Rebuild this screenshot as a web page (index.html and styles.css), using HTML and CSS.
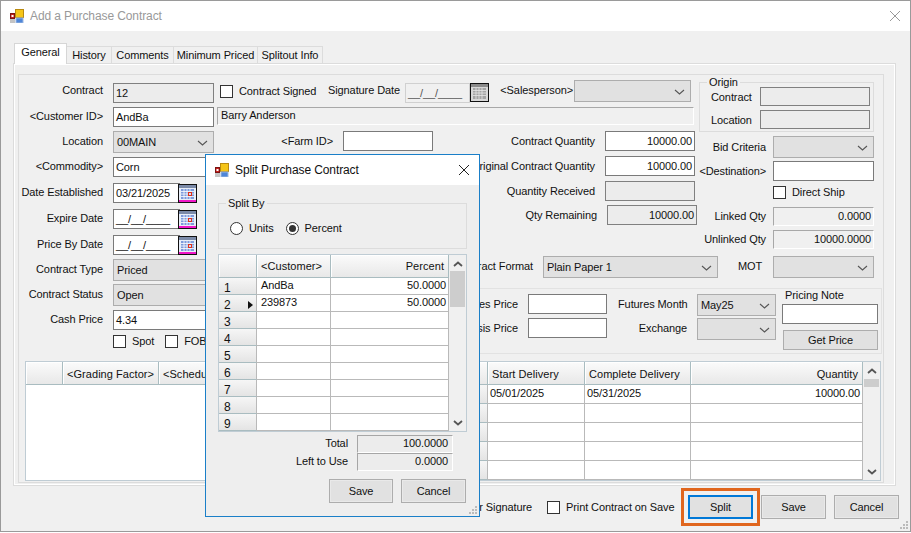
FILE: index.html
```html
<!DOCTYPE html>
<html lang="en">
<head>
<meta charset="utf-8">
<title>Add a Purchase Contract</title>
<link rel="stylesheet" href="styles.css">
</head>
<body>
<svg width="0" height="0" class="defs">
  <symbol id="app" viewBox="0 0 14 14">
    <rect x="5.500" y=".5" width="8" height="8" fill="#f5c518" stroke="#b98a10" stroke-width="1"/>
    <rect x=".5" y="4.500" width="4" height="5" fill="#c8201c" stroke="#7a1412" stroke-width="1"/>
    <rect x="6" y="9" width="7" height="5" fill="#4f86d8" stroke="#9db8e0" stroke-width="1"/>
    <rect x="0" y="10" width="5" height="4" fill="#c4c4c4"/>
    <rect x="1.500" y="6" width="2" height="2" fill="#fff"/>
  </symbol>
  <symbol id="cal" viewBox="0 0 19 19">
    <rect x="0" y="0" width="19" height="19" fill="#111"/>
    <rect x="1" y="1" width="17" height="17" fill="#e8eef8"/>
    <rect x="1" y="1" width="17" height="3" fill="#7b8aa8"/>
    <path d="M3 5h13v10H3z" fill="#7d9bdc"/>
    <path d="M3 7.500h13M3 10h13M3 12.500h13M6 5v10M9 5v10M12 5v10" stroke="#fff" stroke-width=".8"/>
    <rect x="10.500" y="8.500" width="3" height="3" fill="none" stroke="#e0301c"/>
    <rect x="1" y="16" width="17" height="2" fill="#f016c8"/>
  </symbol>
  <symbol id="calx" viewBox="0 0 19 19">
    <rect x="0" y="0" width="19" height="19" fill="#111"/>
    <rect x="1" y="1" width="17" height="17" fill="#d8d8d8"/>
    <rect x="1" y="1" width="17" height="3" fill="#8a8a8a"/>
    <path d="M3 5h13v11H3z" fill="#a4a4a4"/>
    <path d="M3 7.500h13M3 10h13M3 12.500h13M6 5v11M9 5v11M12 5v11" stroke="#e6e6e6" stroke-width=".8"/>
  </symbol>
  <symbol id="chev" viewBox="0 0 11 6">
    <path d="M1 1l4.500 4L10 1" fill="none" stroke="#555" stroke-width="1.100"/>
  </symbol>
  <symbol id="sbup" viewBox="0 0 10 6">
    <path d="M1 5l4-3.500L9 5" fill="none" stroke="#555" stroke-width="1.800"/>
  </symbol>
  <symbol id="sbdn" viewBox="0 0 10 6">
    <path d="M1 1l4 3.500L9 1" fill="none" stroke="#555" stroke-width="1.800"/>
  </symbol>
  <symbol id="x" viewBox="0 0 12 12">
    <path d="M1 1l10 10M11 1L1 11" fill="none" stroke="currentColor" stroke-width="1"/>
  </symbol>
  <symbol id="grip" viewBox="0 0 9 9">
    <path d="M6 0h2v2H6zM3 3h2v2H3zM6 3h2v2H6zM0 6h2v2H0zM3 6h2v2H3zM6 6h2v2H6z" fill="#bbb"/>
  </symbol>
</svg>

<div class="window">
  <header class="titlebar">
    <svg class="appicon"><use href="#app"/></svg>
    <span class="title muted">Add a Purchase Contract</span>
    <svg class="close muted"><use href="#x"/></svg>
  </header>

  <div class="tabs">
    <span class="tab active">General</span>
    <span class="tab t-history">History</span>
    <span class="tab t-comments">Comments</span>
    <span class="tab t-min">Minimum Priced</span>
    <span class="tab t-split">Splitout Info</span>
  </div>

  <section class="tabpanel">
    <div class="inner">
      <div class="form">
        <div class="col-left">
          <div class="row"><label class="lbl up">Contract</label><span class="fld ro w101">12</span></div>
          <div class="row mt4"><label class="lbl">&lt;Customer ID&gt;</label><span class="fld w101">AndBa</span></div>
          <div class="row mt4"><label class="lbl">Location</label><span class="combo w101">00MAIN<svg class="chev"><use href="#chev"/></svg></span></div>
          <div class="row mt4"><label class="lbl">&lt;Commodity&gt;</label><span class="fld w101">Corn</span></div>
          <div class="row mt6"><label class="lbl">Date Established</label><span class="fld w67">03/21/2025</span><svg class="calbtn"><use href="#cal"/></svg></div>
          <div class="row mt6"><label class="lbl">Expire Date</label><span class="fld w67">__/__/____</span><svg class="calbtn"><use href="#cal"/></svg></div>
          <div class="row mt6"><label class="lbl">Price By Date</label><span class="fld w67">__/__/____</span><svg class="calbtn"><use href="#cal"/></svg></div>
          <div class="row mt4"><label class="lbl">Contract Type</label><span class="combo w101">Priced</span></div>
          <div class="row mt3"><label class="lbl">Contract Status</label><span class="combo w101">Open</span></div>
          <div class="row mt4"><label class="lbl">Cash Price</label><span class="fld w101">4.34</span></div>
          <div class="row mt5 checks"><span class="check"></span><span class="cklbl c-spot">Spot</span><span class="check"></span><span class="cklbl">FOB</span></div>
        </div>

        <div class="col-rest">
          <div class="rest-top">
            <div class="center">
              <div class="row r1">
                <span class="check"></span><span class="cklbl c-signed">Contract Signed</span>
                <label class="plain sigl">Signature Date</label>
                <span class="fld ro-light w65">__/__/____</span><svg class="calbtn cal-x"><use href="#calx"/></svg>
                <label class="plain sales">&lt;Salesperson&gt;</label>
                <span class="combo w117"><svg class="chev"><use href="#chev"/></svg></span>
              </div>
              <div class="name">Barry Anderson</div>
              <div class="row r3">
                <label class="plain farm">&lt;Farm ID&gt;</label><span class="fld w90"></span>
                <label class="plain q1">Contract Quantity</label><span class="fld w90 num">10000.00</span>
              </div>
              <div class="row r4"><label class="plain q2">Original Contract Quantity</label><span class="fld w90 num">10000.00</span></div>
              <div class="row r5"><label class="plain q2">Quantity Received</label><span class="fld ro w90"></span></div>
              <div class="row r6"><label class="plain q3">Qty Remaining</label><span class="fld ro w90 num">10000.00</span></div>
            </div>

            <div class="right">
              <fieldset class="origin">
                <legend>Origin</legend>
                <div class="row"><label class="plain olbl">Contract</label><span class="fld ro w110"></span></div>
                <div class="row mt4"><label class="plain olbl">Location</label><span class="fld ro w110"></span></div>
              </fieldset>
              <div class="row bid"><label class="plain rlbl">Bid Criteria</label><span class="combo w101"><svg class="chev"><use href="#chev"/></svg></span></div>
              <div class="row mt3"><label class="plain rlbl">&lt;Destination&gt;</label><span class="fld w101"></span></div>
              <div class="row ds"><span class="check"></span><span class="cklbl">Direct Ship</span></div>
              <div class="row linked"><label class="plain rlbl">Linked Qty</label><span class="fld sunk w101 num">0.0000</span></div>
              <div class="row mt4"><label class="plain rlbl">Unlinked Qty</label><span class="fld sunk w101 num">10000.0000</span></div>
            </div>
          </div>

          <div class="row format">
            <label class="plain flbl">Contract Format</label>
            <span class="combo w175">Plain Paper 1<svg class="chev"><use href="#chev"/></svg></span>
            <label class="plain mot">MOT</label>
            <span class="combo w101"><svg class="chev"><use href="#chev"/></svg></span>
          </div>
        </div>
      </div>

      <div class="pricing">
        <div class="p-col">
          <div class="row"><label class="plain plbl">Futures Price</label><span class="fld w79"></span></div>
          <div class="row mt4"><label class="plain plbl">Basis Price</label><span class="fld w79"></span></div>
        </div>
        <div class="p-col m-col">
          <div class="row"><label class="plain mlbl">Futures Month</label><span class="combo w79">May25<svg class="chev"><use href="#chev"/></svg></span></div>
          <div class="row mt2"><label class="plain mlbl">Exchange</label><span class="combo w79"><svg class="chev"><use href="#chev"/></svg></span></div>
        </div>
        <div class="p-col note">
          <span class="notel">Pricing Note</span>
          <span class="fld w96"></span>
          <button class="btn flat getprice">Get Price</button>
        </div>
      </div>

      <div class="mainwrap">
        <div class="mgrid">
          <div class="hc"></div><div class="hc">&lt;Grading Factor&gt;</div><div class="hc">&lt;Scheduled Delivery&gt;</div><div class="hc"></div><div class="hc">Start Delivery</div><div class="hc">Complete Delivery</div><div class="hc r">Quantity</div>
          <div class="m-blank"></div>
          <div class="rh"></div><div class="c">05/01/2025</div><div class="c">05/31/2025</div><div class="c r">10000.00</div>
          <div class="rh"></div><div class="c"></div><div class="c"></div><div class="c"></div>
          <div class="rh"></div><div class="c"></div><div class="c"></div><div class="c"></div>
          <div class="rh"></div><div class="c"></div><div class="c"></div><div class="c"></div>
          <div class="rh"></div><div class="c"></div><div class="c"></div><div class="c"></div>
        </div>
        <div class="sbar">
          <svg class="sb-arrow"><use href="#sbup"/></svg>
          <span class="thumb t-main"></span>
          <svg class="sb-arrow end"><use href="#sbdn"/></svg>
        </div>
      </div>
    </div>
  </section>

  <footer class="actions">
    <span class="cklbl sigprint">Print Buyer Signature</span>
    <span class="check"></span><span class="cklbl c-print">Print Contract on Save</span>
    <span class="hilite"><button class="btn focus">Split</button></span>
    <button class="btn">Save</button>
    <button class="btn">Cancel</button>
  </footer>
  <svg class="grip"><use href="#grip"/></svg>
</div>

<div class="dialog">
  <header class="dlg-title">
    <svg class="appicon"><use href="#app"/></svg>
    <span class="title">Split Purchase Contract</span>
    <svg class="close dark"><use href="#x"/></svg>
  </header>
  <div class="dlg-body">
    <fieldset class="splitby">
      <legend>Split By</legend>
      <div class="radios">
        <span class="radio"></span><span class="cklbl rl1">Units</span>
        <span class="radio on"></span><span class="cklbl">Percent</span>
      </div>
    </fieldset>
    <div class="dgridwrap">
      <div class="dgrid">
        <div class="hc"></div><div class="hc">&lt;Customer&gt;</div><div class="hc r">Percent</div>
        <div class="rh">1</div><div class="c">AndBa</div><div class="c r">50.0000</div>
        <div class="rh cur">2<i class="arrow"></i></div><div class="c">239873</div><div class="c r">50.0000</div>
        <div class="rh">3</div><div class="c"></div><div class="c"></div>
        <div class="rh">4</div><div class="c"></div><div class="c"></div>
        <div class="rh">5</div><div class="c"></div><div class="c"></div>
        <div class="rh">6</div><div class="c"></div><div class="c"></div>
        <div class="rh">7</div><div class="c"></div><div class="c"></div>
        <div class="rh">8</div><div class="c"></div><div class="c"></div>
        <div class="rh">9</div><div class="c"></div><div class="c"></div>
      </div>
      <div class="sbar">
        <svg class="sb-arrow"><use href="#sbup"/></svg>
        <span class="thumb t-dlg"></span>
        <svg class="sb-arrow end"><use href="#sbdn"/></svg>
      </div>
    </div>
    <div class="totals">
      <div class="row"><label class="plain">Total</label><span class="tot">100.0000</span></div>
      <div class="row"><label class="plain">Left to Use</label><span class="tot">0.0000</span></div>
    </div>
    <div class="dlg-actions">
      <button class="btn dlg-save">Save</button>
      <button class="btn">Cancel</button>
    </div>
  </div>
  <svg class="grip"><use href="#grip"/></svg>
</div>
</body>
</html>
```
FILE: styles.css
```css
* { box-sizing: border-box; }
html, body { margin: 0; padding: 0; }
body {
  position: relative;
  width: 911px;
  height: 533px;
  overflow: hidden;
  background: #fff;
  font: 11px/1 "Liberation Sans", Arial, sans-serif;
  letter-spacing: -.1px;
  color: #111;
}
.defs { position: absolute; }

/* window */
.window {
  position: relative;
  width: 911px;
  height: 532px;
  background: #f0f0f0;
  border: 1px solid #9a9a9a;
  display: flex;
  flex-direction: column;
}
.titlebar {
  height: 30px;
  flex: none;
  background: #fff;
  display: flex;
  align-items: center;
  padding: 0 9px;
}
.appicon { width: 14px; height: 14px; flex: none; margin-right: 6px; }
.title { font-size: 12px; }
.muted { color: #999; }
.close { width: 12px; height: 12px; margin-left: auto; }
.close.dark { color: #222; }

/* tabs */
.tabs {
  display: flex;
  align-items: flex-end;
  height: 32px;
  padding-left: 13px;
  flex: none;
}
.tab {
  height: 17px;
  line-height: 16px;
  padding: 0;
  background: #f0f0f0;
  border: 1px solid #dcdcdc;
  border-bottom: 0;
  margin-left: -1px;
  text-align: center;
  white-space: nowrap;
}
.tab.active {
  height: 21px;
  width: 53px;
  background: #fff;
  margin-left: 0;
  border-color: #d6d6d6;
  position: relative;
  top: 1px;
}
.t-history { width: 46px; }
.t-comments { width: 63px; }
.t-min { width: 85px; }
.t-split { width: 66px; }

.tabpanel {
  margin-left: 12px;
  width: 883px;
  height: 423px;
  border: 1px solid #dcdcdc;
  box-shadow: inset 0 0 0 1px #fff;
  background: #f0f0f0;
  padding: 10px 11px 2px 4px;
  flex: none;
}
.inner {
  height: 100%;
  border: 1px solid #dcdcdc;
  padding: 8px 0 0 1px;
}

/* form */
.form { display: flex; height: 205px; }
.col-left { width: 195px; flex: none; }
.col-rest { width: 670px; flex: none; }
.rest-top { display: flex; height: 173px; }
.center { width: 484px; flex: none; }
.right { width: 180px; flex: none; }

.row { display: flex; align-items: center; }
.mt2 { margin-top: 2px; }
.mt3 { margin-top: 3px; }
.mt4 { margin-top: 4px; }
.mt5 { margin-top: 5px; }
.mt6 { margin-top: 6px; }

.lbl { width: 83px; text-align: right; margin-right: 10px; flex: none; padding-bottom: 2px; white-space: nowrap; }
.lbl.up { padding-bottom: 5px; }
.plain { flex: none; text-align: right; white-space: nowrap; }

.fld {
  display: block;
  height: 20px;
  border: 1px solid #7a7a7a;
  background: #fff;
  line-height: 19px;
  padding: 0 2px;
  flex: none;
  white-space: nowrap;
}
.fld.ro { background: #ececec; border-color: #808080; }
.fld.ro-light { background: #f0f0f0; border-color: #d0d0d0; color: #555; }
.fld.sunk { background: #f0f0f0; border-color: #a8a8a8 #fff #fff #a8a8a8; }
.num { text-align: right; }
.w65 { width: 65px; }
.w67 { width: 67px; }
.w79 { width: 79px; }
.w90 { width: 90px; }
.w96 { width: 96px; }
.w101 { width: 101px; }
.w110 { width: 110px; }
.w117 { width: 117px; }
.w175 { width: 175px; }

.combo {
  position: relative;
  display: block;
  flex: none;
  height: 22px;
  line-height: 21px;
  padding: 0 3px;
  background: #e1e1e1;
  border: 1px solid #adadad;
}
.chev { position: absolute; right: 5px; top: 8px; width: 11px; height: 6px; }

.calbtn { width: 19px; height: 19px; flex: none; margin-left: -2px; }
.cal-x { margin-left: 0; }

.check {
  display: block;
  flex: none;
  width: 13px;
  height: 13px;
  background: #fff;
  border: 1px solid #333;
}
.cklbl { flex: none; margin-left: 6px; white-space: nowrap; }
.c-spot { margin-right: 11px; }
.checks { padding-left: 93px; }

/* centre column */
.r1 { height: 20px; margin-left: 5px; }
.c-signed { width: 77px; margin-right: 12px; padding-bottom: 3px; }
.sigl { width: 71px; margin-right: 6px; padding-bottom: 5px; }
.sales { width: 73px; margin: 0 1px 0 11px; padding-bottom: 5px; }
.r1 .combo { margin-top: -4px; }
.r1 .calbtn { margin-top: -1px; }
.r1 .check { margin-top: -3px; }
.name {
  margin: 4px 0 0 2px;
  width: 477px;
  height: 18px;
  line-height: 15px;
  padding-left: 3px;
  background: #f0f0f0;
  border: 1px solid;
  border-color: #a8a8a8 #fff #fff #a8a8a8;
}
.r3 { margin-top: 6px; }
.farm { width: 118px; margin-right: 10px; }
.q1 { width: 162px; margin-right: 10px; }
.r4, .r5 { margin-top: 5px; }
.r6 { margin-top: 4px; }
.q2 { width: 380px; margin-right: 10px; }
.q3 { width: 382px; margin-right: 10px; }

/* right column */
.origin {
  margin: -6px 0 0 0;
  padding: 0 3px 0 11px;
  width: 175px;
  height: 55px;
  border: 1px solid #dcdcdc;
}
.origin legend { padding: 0 2px; margin: 0 0 -1px -4px; line-height: 11px; }
.olbl { width: 41px; text-align: left; margin-right: 8px; padding-top: 2px; }
.origin .fld { height: 19px; }
.rlbl { width: 67px; margin-right: 7px; }
.bid { margin-top: 4px; }
.ds { margin: 5px 0 0 74px; }
.linked { margin-top: 8px; }
.right .fld.sunk { height: 19px; line-height: 16px; }

/* format row */
.format { height: 22px; }
.flbl { width: 318px; margin-right: 10px; padding-bottom: 2px; }
.mot { width: 22px; margin: 0 13px 0 20px; padding-bottom: 2px; }

/* pricing */
.pricing {
  display: flex;
  margin-left: 280px;
  width: 582px;
  height: 66px;
  border: 1px solid #e2e2e2;
  padding: 5px 0 0 0;
}
.p-col { flex: none; }
.plbl { width: 217px; margin-right: 10px; }
.m-col { margin-left: 11px; }
.mlbl { width: 69px; margin-right: 10px; padding-bottom: 2px; }
.note { margin-left: 6px; width: 98px; display: flex; flex-direction: column; }
.notel { margin: -4px 0 4px 3px; height: 10px; line-height: 10px; }

/* grids */
.mainwrap {
  display: flex;
  width: 856px;
  height: 120px;
  margin: 7px 0 0 5px;
  border: 1px solid #bfccd4;
  background: #f0f0f0;
}
.mgrid {
  display: grid;
  grid-template-columns: 37px 96px 319px 10px 97px 106px 172px;
  grid-template-rows: 23px repeat(5, 19px);
  width: 837px;
  background: #fff;
  flex: none;
}
.m-blank { grid-row: 2 / 7; grid-column: 1 / 4; background: #fff; }
.hc {
  background: linear-gradient(#fbfbfb, #e8e8e8);
  border-right: 1px solid #a9bcc0;
  border-bottom: 1px solid #a9bcc0;
  line-height: 24px;
  padding: 0 4px;
  letter-spacing: .05px;
  white-space: nowrap;
  overflow: hidden;
  box-shadow: inset 1px 1px 0 #fff;
}
.c {
  border-right: 1px solid #b9b9b9;
  border-bottom: 1px solid #b9b9b9;
  line-height: 16px;
  padding: 0 2px;
  white-space: nowrap;
  overflow: hidden;
}
.r { text-align: right; }
.rh {
  background: linear-gradient(#f6f6f6, #e4e4e4);
  border-right: 1px solid #b9b9b9;
  border-bottom: 1px solid #a9bcc0;
  position: relative;
  padding: 4px 0 0 5px;
  font-size: 12px;
}
.sbar {
  flex: 1;
  display: flex;
  flex-direction: column;
  align-items: stretch;
  background: #f0f0f0;
}
.sb-arrow { width: 10px; height: 6px; margin: 6px auto 5px; flex: none; }
.sb-arrow.end { margin-top: auto; margin-bottom: 5px; }
.thumb { display: block; background: #cdcdcd; flex: none; margin: 0 1px; }
.t-main { height: 8px; }
.t-dlg { height: 36px; margin-top: -1px; }

/* footer */
.actions {
  display: flex;
  align-items: center;
  height: 38px;
  margin-top: 2px;
  padding-left: 428px;
}
.sigprint { width: 103px; text-align: right; margin: 0 15px 0 0; }
.c-print { width: 108px; margin-right: 7px; }
.btn {
  font: inherit;
  letter-spacing: inherit;
  color: #111;
  width: 65px;
  height: 24px;
  padding: 0;
  background: #e1e1e1;
  border: 1px solid #adadad;
  box-shadow: inset 0 0 0 1px #e9e9e9;
}
.btn.flat { box-shadow: none; }
.btn.getprice { margin: 6px 0 0 1px; width: 95px; height: 20px; }
.btn.dlg-save { width: 64px; }
.actions .btn { margin-right: 8px; }
.actions > .btn { flex: none; }
.hilite {
  flex: none;
  width: 79px;
  height: 38px;
  margin-right: 1px;
  border: 3px solid #e0661e;
  padding: 4px;
  display: block;
}
.actions .hilite .btn.focus {
  display: block;
  width: 65px;
  height: 24px;
  margin: 0;
  border: 2px solid #0078d7;
  box-shadow: none;
}
.grip { position: absolute; right: 1px; bottom: 1px; width: 9px; height: 9px; }

/* dialog */
.dialog {
  position: absolute;
  left: 205px;
  top: 154px;
  width: 275px;
  height: 363px;
  border: 1px solid #1a7fc8;
  background: #eeeeee;
  display: flex;
  flex-direction: column;
}
.dlg-title {
  height: 30px;
  flex: none;
  background: #fff;
  display: flex;
  align-items: center;
  padding: 0 9px;
}
.dlg-body { padding: 0 12px; flex: 1; display: flex; flex-direction: column; }
.splitby {
  margin: 13px 0 0 0;
  width: 249px;
  height: 51px;
  flex: none;
  border: 1px solid #dcdcdc;
  padding: 13px 0 0 11px;
}
.splitby legend { margin-left: -4px; padding: 0 2px; line-height: 11px; }
.radios { display: flex; align-items: center; }
.radio {
  position: relative;
  display: block;
  flex: none;
  width: 13px;
  height: 13px;
  border-radius: 50%;
  border: 1px solid #333;
  background: #fff;
}
.radio.on::after {
  content: "";
  position: absolute;
  left: 2px;
  top: 2px;
  width: 7px;
  height: 7px;
  border-radius: 50%;
  background: #333;
}
.rl1 { margin-right: 12px; }
.dgridwrap {
  display: flex;
  flex: none;
  width: 249px;
  height: 178px;
  margin-top: 5px;
  border: 1px solid #bfccd4;
  background: #f0f0f0;
}
.dgrid {
  display: grid;
  grid-template-columns: 38px 74px 118px;
  grid-template-rows: 23px repeat(9, 17px);
  width: 230px;
  height: 176px;
  background: #fff;
  overflow: hidden;
  flex: none;
}
.dgrid .c { line-height: 14px; padding: 0 2px 0 4px; }
.dgrid .c.r { padding: 0 2px; }
.dgrid .hc { line-height: 23px; }
.arrow {
  position: absolute;
  right: 3px;
  top: 6px;
  width: 0;
  height: 0;
  border-left: 5px solid #111;
  border-top: 4px solid transparent;
  border-bottom: 4px solid transparent;
}
.totals { width: 235px; margin-top: 3px; }
.totals .row { justify-content: flex-end; height: 18px; }
.totals label { margin-right: 9px; padding-bottom: 2px; }
.tot {
  display: block;
  width: 96px;
  height: 18px;
  line-height: 15px;
  text-align: right;
  padding-right: 4px;
  background: #ececec;
  border: 1px solid;
  border-color: #a6a6a6 #fff #fff #a6a6a6;
}
.dlg-actions {
  display: flex;
  justify-content: flex-end;
  gap: 8px;
  margin-top: 8px;
  width: 248px;
}
```
